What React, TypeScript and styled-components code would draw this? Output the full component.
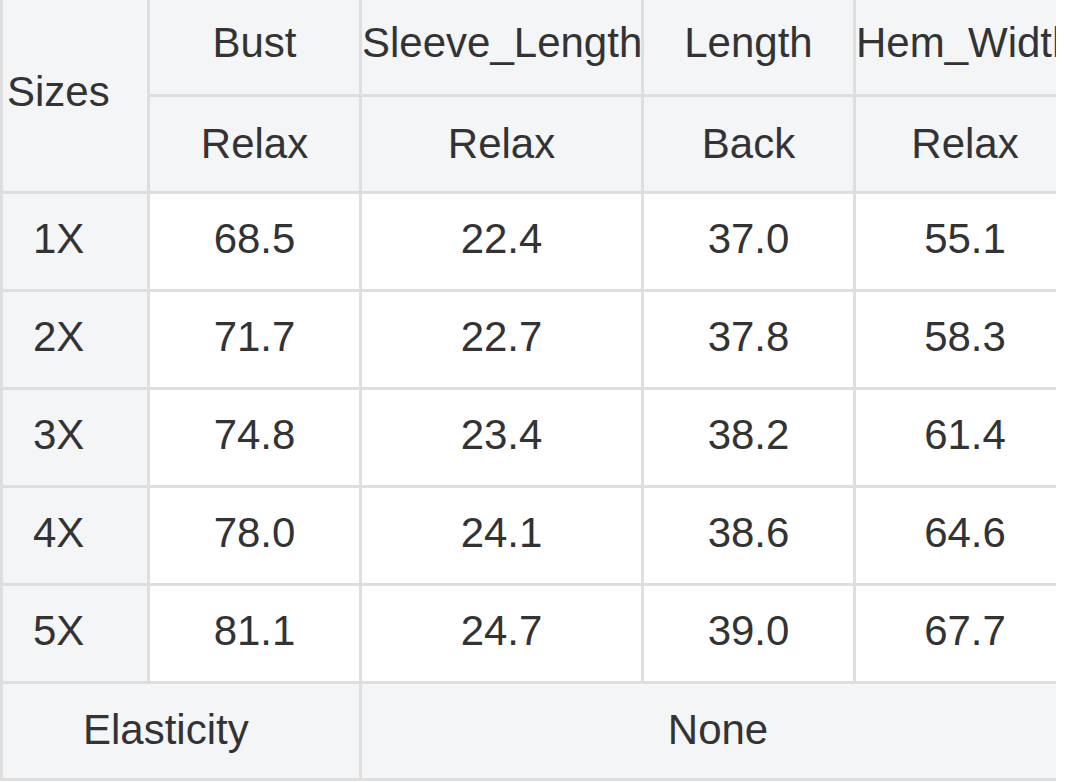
import styled, { createGlobalStyle } from "styled-components";

const GlobalStyle = createGlobalStyle`
  html, body {
    margin: 0;
    padding: 0;
    background: #ffffff;
  }
  body {
    font-family: "Liberation Sans", Arial, Helvetica, sans-serif;
    color: #333333;
  }
`;

const sizeRows = [
  { size: "1X", values: ["68.5", "22.4", "37.0", "55.1"] },
  { size: "2X", values: ["71.7", "22.7", "37.8", "58.3"] },
  { size: "3X", values: ["74.8", "23.4", "38.2", "61.4"] },
  { size: "4X", values: ["78.0", "24.1", "38.6", "64.6"] },
  { size: "5X", values: ["81.1", "24.7", "39.0", "67.7"] },
];

const columns = [
  { name: "Bust", kind: "Relax" },
  { name: "Sleeve_Length", kind: "Relax" },
  { name: "Length", kind: "Back" },
  { name: "Hem_Width", kind: "Relax" },
];

const colWidths = [147, 212, 282, 212, 221];

const App = () => {
  return (
    <>
      <GlobalStyle />
      <Scroller>
        <Table>
          <colgroup>
            {colWidths.map((w, i) => (
              <col key={i} style={{ width: w }} />
            ))}
          </colgroup>
          <thead>
            <tr>
              <SizesHead rowSpan={2}>Sizes</SizesHead>
              {columns.map((c) => (
                <HeadCell key={c.name} $line={86} $lift={8}>
                  {c.name}
                </HeadCell>
              ))}
            </tr>
            <tr>
              {columns.map((c) => (
                <HeadCell key={c.name} $line={93} $lift={1}>
                  {c.kind}
                </HeadCell>
              ))}
            </tr>
          </thead>
          <tbody>
            {sizeRows.map((row) => (
              <tr key={row.size}>
                <SizeCell>{row.size}</SizeCell>
                {row.values.map((v, i) => (
                  <ValueCell key={i}>{v}</ValueCell>
                ))}
              </tr>
            ))}
            <tr>
              <FootLabel colSpan={2}>Elasticity</FootLabel>
              <FootValue colSpan={3}>None</FootValue>
            </tr>
          </tbody>
        </Table>
      </Scroller>
    </>
  );
};

const Scroller = styled.div`
  width: 1056px;
  overflow: hidden;
`;
const Table = styled.table`
  table-layout: fixed;
  width: 1077px;
  border-collapse: separate;
  border-spacing: 0;
  border-left: 3px solid #dedede;
  font-size: 42px;
  white-space: nowrap;
`;
const Cell = styled.td`
  box-sizing: border-box;
  padding: 0;
  border-right: 3px solid #dedede;
  border-bottom: 3px solid #dedede;
  text-align: center;
  vertical-align: middle;
  overflow: hidden;
`;
const HeadCell = styled(Cell).attrs({ as: "th" })<{ $line: number; $lift: number }>`
  font-weight: normal;
  background: #f4f5f7;
  line-height: ${({ $line }) => $line}px;
  padding-bottom: ${({ $lift }) => $lift}px;
`;
const SizesHead = styled(Cell).attrs({ as: "th" })`
  font-weight: normal;
  background: #f4f5f7;
  text-align: left;
  line-height: 48px;
  padding-left: 4px;
  padding-bottom: 7px;
`;
const SizeCell = styled(Cell)`
  background: #f4f5f7;
  text-align: left;
  padding-left: 30px;
  line-height: 89px;
  padding-bottom: 6px;
`;
const ValueCell = styled(Cell)`
  background: #ffffff;
  line-height: 89px;
  padding-bottom: 6px;
`;
const FootLabel = styled(Cell)`
  background: #f4f5f7;
  text-align: left;
  padding-left: 80px;
  line-height: 91px;
  padding-bottom: 3px;
`;
const FootValue = styled(Cell)`
  background: #f4f5f7;
  line-height: 91px;
  padding-bottom: 3px;
`;

export default App;
